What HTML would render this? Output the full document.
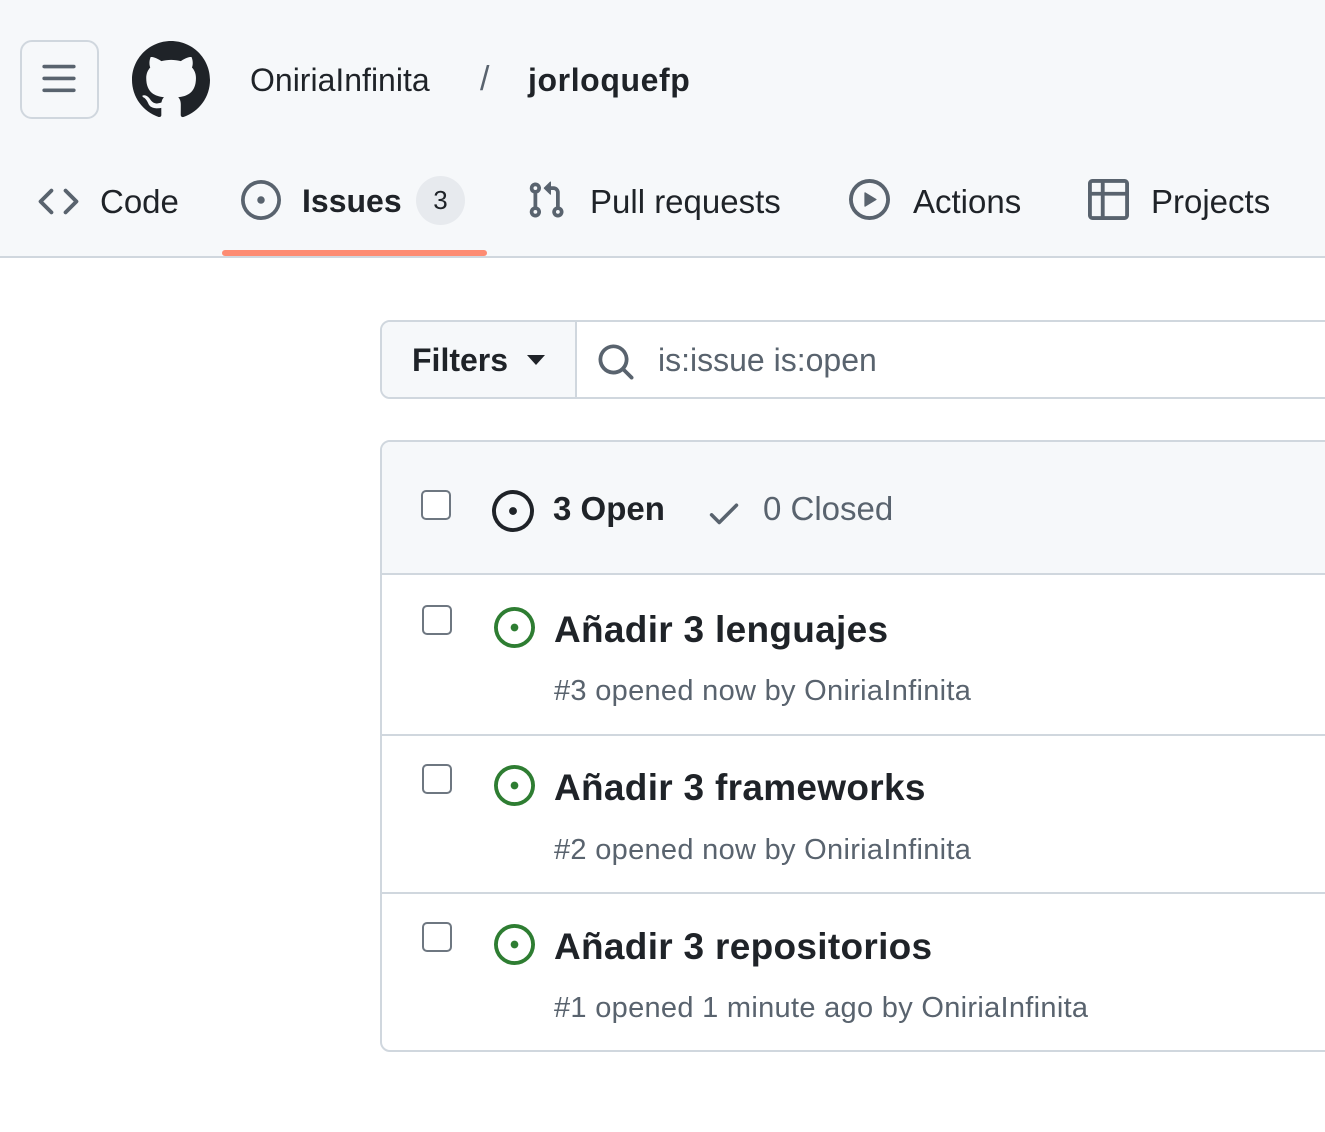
<!DOCTYPE html>
<html><head><meta charset="utf-8"><style>
*{margin:0;padding:0;box-sizing:border-box}
body{width:1325px;height:1132px;background:#fff;font-family:"Liberation Sans",sans-serif;color:#1f2328;position:relative;overflow:hidden}
.a{position:absolute;white-space:nowrap}
.hdr{position:absolute;left:0;top:0;width:1325px;height:258px;background:#f6f8fa;border-bottom:2px solid #d0d7de}
.t{position:absolute;white-space:nowrap;line-height:1}
.m{font-size:29px;letter-spacing:0.3px;color:#59636e}
svg{position:absolute}
</style></head><body>
<div class="hdr"></div>
<div class="a" style="left:20px;top:40px;width:79px;height:79px;border:2px solid #d0d7de;border-radius:12px;background:#f6f8fa"></div>
<svg style="left:40px;top:60px" width="38" height="38" viewBox="0 0 16 16"><path fill="#59636e" d="M1 2.750A.75.75 0 0 1 1.75 2h12.5a.75.75 0 0 1 0 1.5H1.75A.75.75 0 0 1 1 2.75Zm0 5A.75.75 0 0 1 1.75 7h12.5a.75.75 0 0 1 0 1.5H1.75A.75.75 0 0 1 1 7.75ZM1.75 12h12.5a.75.75 0 0 1 0 1.5H1.75a.75.75 0 0 1 0-1.5Z"/></svg>
<svg style="left:132px;top:41px" width="78" height="78" viewBox="0 0 16 16"><path fill="#1f2328" d="M8 0c4.42 0 8 3.58 8 8a8.013 8.013 0 0 1-5.45 7.59c-.4.08-.55-.17-.55-.38 0-.27.01-1.13.01-2.2 0-.75-.25-1.23-.54-1.48 1.78-.2 3.65-.88 3.65-3.95 0-.88-.31-1.59-.82-2.150.08-.2.36-1.02-.08-2.12 0 0-.67-.22-2.2.82-.64-.18-1.32-.27-2-.27-.68 0-1.36.09-2 .27-1.53-1.03-2.2-.82-2.2-.82-.44 1.1-.16 1.92-.08 2.12-.51.56-.82 1.28-.82 2.15 0 3.06 1.86 3.75 3.64 3.95-.23.2-.44.55-.51 1.07-.46.21-1.61.55-2.330-.66-.15-.24-.6-.83-1.23-.82-.67.01-.27.38.01.53.34.19.73.9.82 1.13.16.45.68 1.31 2.690.94 0 .67.01 1.3.01 1.49 0 .21-.15.45-.55.38A7.995 7.995 0 0 1 0 8c0-4.42 3.58-8 8-8Z"/></svg>
<div class="t" style="left:250px;top:64px;font-size:32px">OniriaInfinita</div>
<div class="t" style="left:480px;top:62px;font-size:34px;color:#59636e">/</div>
<div class="t" style="left:528px;top:64px;font-size:32px;font-weight:bold;letter-spacing:0.6px">jorloquefp</div>

<svg style="left:38px;top:181px" width="41" height="41" viewBox="0 0 16 16"><path fill="#59636e" d="m11.28 3.22 4.25 4.25a.75.75 0 0 1 0 1.06l-4.25 4.25a.749.749 0 0 1-1.275-.326.749.749 0 0 1 .215-.734L13.94 8l-3.72-3.72a.749.749 0 0 1 .326-1.275.749.749 0 0 1 .734.215Zm-6.56 0a.751.751 0 0 1 1.042.018.751.751 0 0 1 .018 1.042L2.06 8l3.72 3.72a.749.749 0 0 1-.326 1.275.749.749 0 0 1-.734-.215L.47 8.53a.75.75 0 0 1 0-1.06Z"/></svg>
<div class="t" style="left:100px;top:185px;font-size:33px">Code</div>
<svg style="left:241px;top:180px" width="40" height="40" viewBox="0 0 16 16"><path fill="#59636e" d="M8 9.5a1.5 1.5 0 1 0 0-3 1.5 1.5 0 0 0 0 3Z"/><path fill="#59636e" d="M8 0a8 8 0 1 1 0 16A8 8 0 0 1 8 0ZM1.5 8a6.5 6.5 0 1 0 13 0 6.5 6.5 0 0 0-13 0Z"/></svg>
<div class="t" style="left:302px;top:185px;font-size:32px;font-weight:bold">Issues</div>
<div class="a" style="left:416px;top:176px;width:49px;height:49px;border-radius:25px;background:#e7eaee;font-size:26px;line-height:49px;text-align:center">3</div>
<div class="a" style="left:222px;top:250px;width:265px;height:6px;border-radius:3px;background:#fd8c73"></div>
<svg style="left:526px;top:180px" width="40" height="40" viewBox="0 0 16 16"><path fill="#59636e" d="M1.5 3.25a2.25 2.25 0 1 1 3 2.122v5.256a2.251 2.251 0 1 1-1.5 0V5.372A2.25 2.25 0 0 1 1.5 3.25Zm5.677-.177L9.573.677A.25.25 0 0 1 10 .854V2.5h1A2.5 2.5 0 0 1 13.5 5v5.628a2.251 2.251 0 1 1-1.5 0V5a1 1 0 0 0-1-1h-1v1.646a.25.25 0 0 1-.427.177L7.177 3.427a.25.25 0 0 1 0-.354ZM3.75 2.5a.75.75 0 1 0 0 1.5.75.75 0 0 0 0-1.5Zm0 9.5a.75.75 0 1 0 0 1.5.75.75 0 0 0 0-1.5Zm8.25.75a.75.75 0 1 0 1.5 0 .75.75 0 0 0-1.5 0Z"/></svg>
<div class="t" style="left:590px;top:185px;font-size:33px">Pull requests</div>
<svg style="left:849px;top:179px" width="41" height="41" viewBox="0 0 16 16"><path fill="#59636e" d="M8 0a8 8 0 1 1 0 16A8 8 0 0 1 8 0ZM1.5 8a6.5 6.5 0 1 0 13 0 6.5 6.5 0 0 0-13 0Zm4.879-2.773 4.264 2.559a.25.25 0 0 1 0 .428l-4.264 2.559A.25.25 0 0 1 6 10.559V5.442a.25.25 0 0 1 .379-.215Z"/></svg>
<div class="t" style="left:913px;top:185px;font-size:33px">Actions</div>
<svg style="left:1088px;top:179px" width="41" height="41" viewBox="0 0 16 16"><path fill="#59636e" d="M0 1.75C0 .784.784 0 1.75 0h12.5C15.216 0 16 .784 16 1.75v12.5A1.75 1.75 0 0 1 14.25 16H1.75A1.75 1.75 0 0 1 0 14.25ZM6.5 6.5v8h7.75a.25.25 0 0 0 .25-.25V6.5Zm8-1.5V1.75a.25.25 0 0 0-.25-.25H6.5V5Zm-13 1.5v7.75c0 .138.112.25.25.25H5v-8ZM5 5V1.5H1.750a.25.25 0 0 0-.25.25V5Z"/></svg>
<div class="t" style="left:1151px;top:185px;font-size:33px">Projects</div>

<div class="a" style="left:380px;top:320px;width:960px;height:79px;border:2px solid #d0d7de;border-radius:10px;background:#fff"></div>
<div class="a" style="left:382px;top:322px;width:195px;height:75px;background:#f6f8fa;border-right:2px solid #d0d7de;border-radius:8px 0 0 8px"></div>
<div class="t" style="left:412px;top:344px;font-size:32px;font-weight:bold">Filters</div>
<svg style="left:526px;top:354px" width="20" height="12" viewBox="0 0 20 12"><path fill="#1f2328" d="M1 1h18l-9 10z"/></svg>
<svg style="left:596px;top:342px" width="40" height="40" viewBox="0 0 16 16"><path fill="#59636e" d="M10.68 11.74a6 6 0 0 1-7.922-8.982 6 6 0 0 1 8.982 7.922l3.04 3.04a.749.749 0 0 1-.326 1.275.749.749 0 0 1-.734-.215ZM11.5 7a4.499 4.499 0 1 0-8.997 0A4.499 4.499 0 0 0 11.5 7Z"/></svg>
<div class="t" style="left:658px;top:344px;font-size:32px;color:#59636e">is:issue is:open</div>

<div class="a" style="left:380px;top:440px;width:970px;height:612px;border:2px solid #d0d7de;border-radius:10px;background:#fff;overflow:hidden">
  <div style="position:absolute;left:0;top:0;width:100%;height:133px;background:#f6f8fa;border-bottom:2px solid #d0d7de"></div>
  <div style="position:absolute;left:0;top:292px;width:100%;height:2px;background:#d0d7de"></div>
  <div style="position:absolute;left:0;top:450px;width:100%;height:2px;background:#d0d7de"></div>
</div>
<div class="a" style="left:421px;top:490px;width:30px;height:30px;border:2px solid #6e7781;border-radius:5px;background:#fff"></div>
<svg style="left:492px;top:490px" width="42" height="42" viewBox="0 0 16 16"><path fill="#1f2328" d="M8 9.5a1.5 1.5 0 1 0 0-3 1.5 1.5 0 0 0 0 3Z"/><path fill="#1f2328" d="M8 0a8 8 0 1 1 0 16A8 8 0 0 1 8 0ZM1.5 8a6.5 6.5 0 1 0 13 0 6.5 6.5 0 0 0-13 0Z"/></svg>
<div class="t" style="left:553px;top:492px;font-size:33px;font-weight:bold">3 Open</div>
<svg style="left:705px;top:494px" width="38" height="38" viewBox="0 0 16 16"><path fill="#59636e" d="M13.78 4.22a.75.75 0 0 1 0 1.06l-7.25 7.25a.75.75 0 0 1-1.06 0L2.22 9.28a.751.751 0 0 1 .018-1.042.751.751 0 0 1 1.042-.018L6 10.94l6.72-6.72a.75.75 0 0 1 1.06 0Z"/></svg>
<div class="t" style="left:763px;top:492px;font-size:33px;color:#59636e">0 Closed</div>

<div class="a" style="left:422px;top:605px;width:30px;height:30px;border:2px solid #6e7781;border-radius:5px"></div>
<svg style="left:494px;top:607px" width="41" height="41" viewBox="0 0 16 16"><path fill="#2e7d32" d="M8 9.5a1.5 1.5 0 1 0 0-3 1.5 1.5 0 0 0 0 3Z"/><path fill="#2e7d32" d="M8 0a8 8 0 1 1 0 16A8 8 0 0 1 8 0ZM1.5 8a6.5 6.5 0 1 0 13 0 6.5 6.5 0 0 0-13 0Z"/></svg>
<div class="t" style="left:554px;top:611px;font-size:37px;font-weight:bold;letter-spacing:0.3px">Añadir 3 lenguajes</div>
<div class="t m" style="left:554px;top:677px">#3 opened now by OniriaInfinita</div>

<div class="a" style="left:422px;top:764px;width:30px;height:30px;border:2px solid #6e7781;border-radius:5px"></div>
<svg style="left:494px;top:765px" width="41" height="41" viewBox="0 0 16 16"><path fill="#2e7d32" d="M8 9.5a1.5 1.5 0 1 0 0-3 1.5 1.5 0 0 0 0 3Z"/><path fill="#2e7d32" d="M8 0a8 8 0 1 1 0 16A8 8 0 0 1 8 0ZM1.5 8a6.5 6.5 0 1 0 13 0 6.5 6.5 0 0 0-13 0Z"/></svg>
<div class="t" style="left:554px;top:769px;font-size:37px;font-weight:bold;letter-spacing:0.3px">Añadir 3 frameworks</div>
<div class="t m" style="left:554px;top:836px">#2 opened now by OniriaInfinita</div>

<div class="a" style="left:422px;top:922px;width:30px;height:30px;border:2px solid #6e7781;border-radius:5px"></div>
<svg style="left:494px;top:924px" width="41" height="41" viewBox="0 0 16 16"><path fill="#2e7d32" d="M8 9.5a1.5 1.5 0 1 0 0-3 1.5 1.5 0 0 0 0 3Z"/><path fill="#2e7d32" d="M8 0a8 8 0 1 1 0 16A8 8 0 0 1 8 0ZM1.5 8a6.5 6.5 0 1 0 13 0 6.5 6.5 0 0 0-13 0Z"/></svg>
<div class="t" style="left:554px;top:928px;font-size:37px;font-weight:bold;letter-spacing:0.3px">Añadir 3 repositorios</div>
<div class="t m" style="left:554px;top:994px">#1 opened 1 minute ago by OniriaInfinita</div>
</body></html>
